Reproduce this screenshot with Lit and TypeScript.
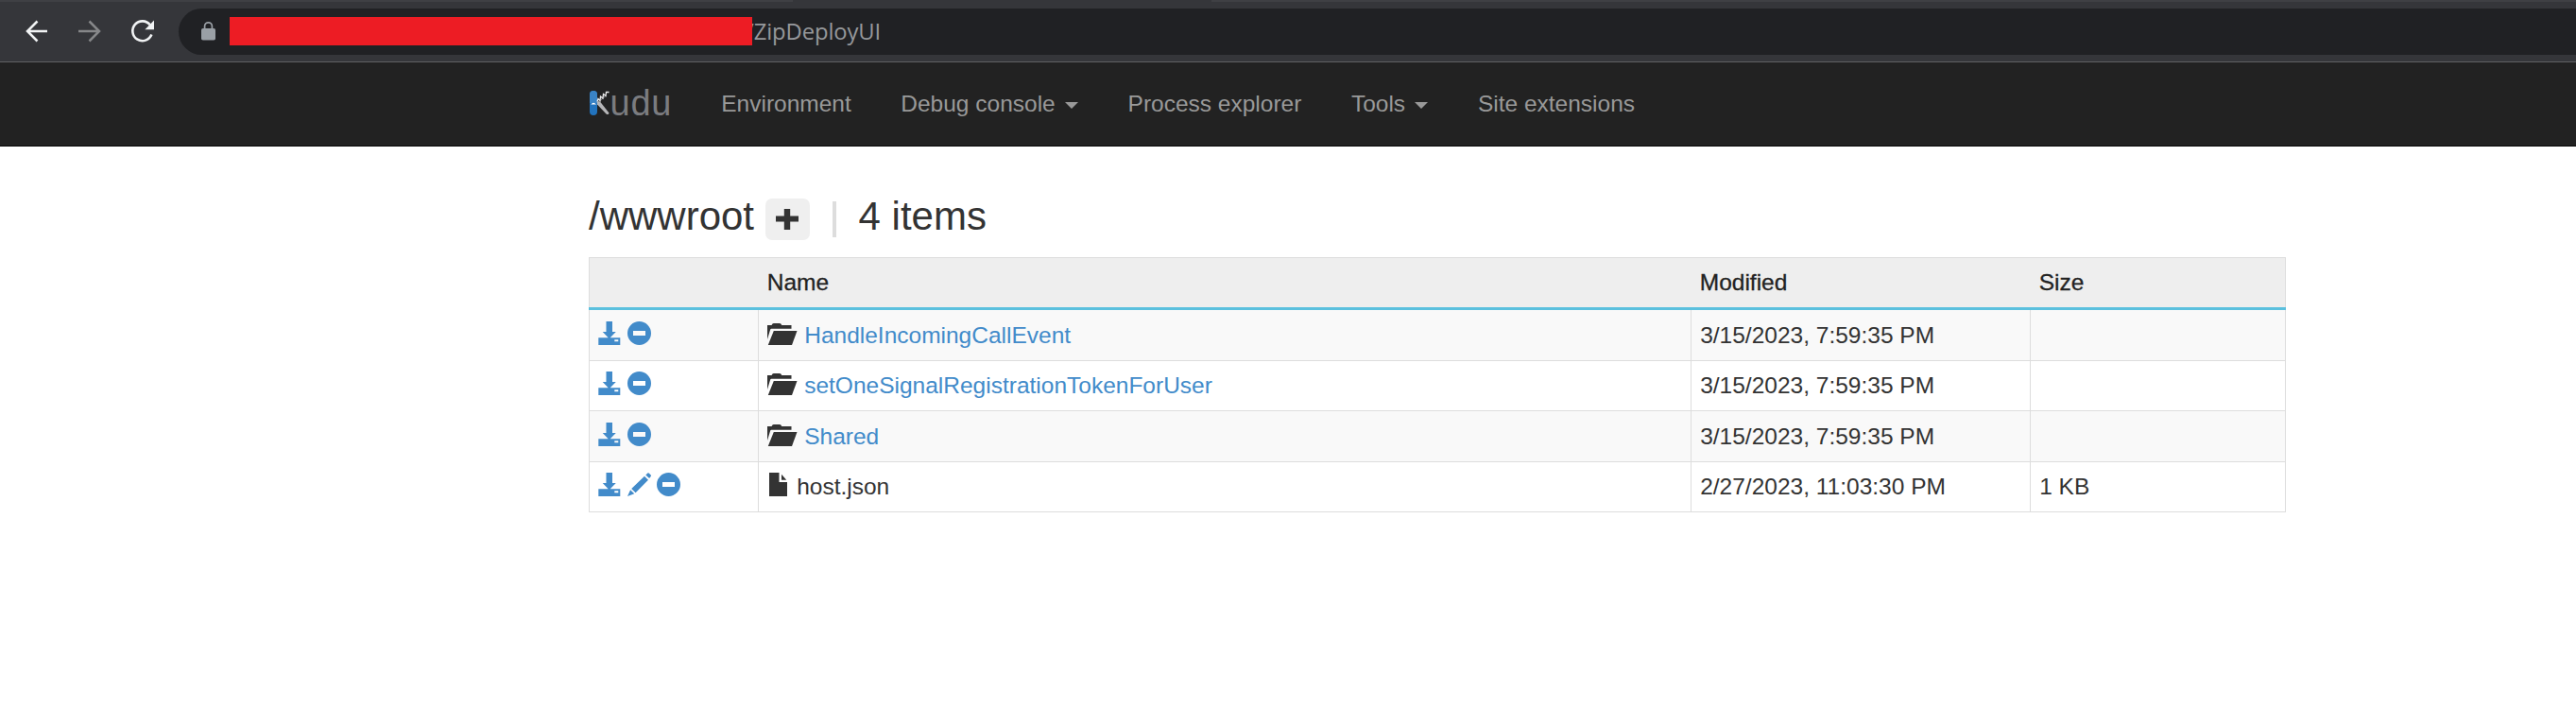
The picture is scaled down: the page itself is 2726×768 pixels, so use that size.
import { LitElement, html, css, svg } from "lit";
import { customElement, property } from "lit/decorators.js";

interface Entry {
  name: string;
  modified: string;
  size: string;
  folder: boolean;
}

const ENTRIES: Entry[] = [
  { name: "HandleIncomingCallEvent", modified: "3/15/2023, 7:59:35 PM", size: "", folder: true },
  { name: "setOneSignalRegistrationTokenForUser", modified: "3/15/2023, 7:59:35 PM", size: "", folder: true },
  { name: "Shared", modified: "3/15/2023, 7:59:35 PM", size: "", folder: true },
  { name: "host.json", modified: "2/27/2023, 11:03:30 PM", size: "1 KB", folder: false },
];

const GLYPHS: Record<string, { w: number; h: number; body: unknown }> = {
  back: { w: 24, h: 24, body: svg`<path d="M12.500 1.500 2 12 12.500 22.500M2 12H23" fill="none" stroke="currentColor" stroke-width="2.5"/>` },
  forward: { w: 24, h: 24, body: svg`<path d="M11.500 1.500 22 12 11.500 22.500M22 12H0" fill="none" stroke="currentColor" stroke-width="2.5"/>` },
  reload: { w: 24, h: 24, body: svg`<path d="M19.800 5.200A10.400 10.400 0 1 0 21.400 15.600" fill="none" stroke="currentColor" stroke-width="2.600"/><path d="M24 .6V10.200H14.400Z" fill="currentColor"/>` },
  lock: { w: 15, h: 20, body: svg`<rect y="7" width="15" height="12.500" rx="1.800" fill="currentColor"/><path d="M3.600 8V4.700a3.900 3.900 0 0 1 7.800 0V8" fill="none" stroke="currentColor" stroke-width="1.700"/>` },
  plus: { w: 24, h: 22, body: svg`<path d="M8.800 0h6.400v7.600H24v6H15.200V22H8.800V13.600H0v-6h8.800z" fill="currentColor"/>` },
  download: { w: 24, h: 25, body: svg`<path d="M8.500 0h6.500v11h3.800L12.700 17.200H23.300V25H.3V17.200H10.700L4.700 11h3.800zM17.300 19.200v2h4v-2z" fill="currentColor" fill-rule="evenodd"/>` },
  remove: { w: 25, h: 25, body: svg`<path d="M12.500 0a12.500 12.500 0 1 1 0 25 12.500 12.500 0 1 1 0-25zM6 10v5h13v-5z" fill="currentColor" fill-rule="evenodd"/>` },
  edit: { w: 25, h: 25, body: svg`<path d="M18 3.700 22 7.700 8.600 21.300 4.200 17zM19.300 2.400 21.400.5Q22 0 22.700.6L24.700 2.600Q25.300 3.300 24.700 4L23.100 6.100zM3.100 18.200 7.300 22.300 0 25z" fill="currentColor"/>` },
  folder: { w: 32, h: 23, body: svg`<path d="M0 17V2h4.500L5.500.6Q6 0 6.800 0H13Q13.800 0 14.300.6L15.300 2H25.500V5.800H4.300Q3.500 5.800 3.200 6.600z" fill="currentColor"/><path d="M6.800 8H31.500L26 23H.8z" fill="currentColor"/>` },
  file: { w: 19, h: 25, body: svg`<path d="M0 0H10.500V10H19V25H0z" fill="currentColor"/><path d="M13 1.800V7.800H18.200z" fill="currentColor"/>` },
  kudu: {
    w: 23, h: 28,
    body: svg`<rect x="0" y="1" width="8" height="26" rx="4" fill="#2273bd"/>
      <path d="M0 14V5a4 4 0 0 1 8 0v9z" fill="#3a84c6"/>
      <path d="M1.300 15.500Q4 12 7 15.500z" fill="#fff"/>
      <path d="M7.800 12.500 11 12.500 20.500 24.500Q20 27 17.500 25.500L8 15.500z" fill="#b5b5b7"/>
      <path d="M8 12.500 9 9.500 11 11.500 11.500 7 14 9 14.500 4.500 17 6.500 17.500 2.500 20.500 2.500" fill="none" stroke="#ececec" stroke-width="1.300"/>
      <path d="M8.500 13.500 18 5.500" fill="none" stroke="#b5b5b7" stroke-width=".8"/>`,
  },
};

@customElement("kudu-icon")
export class KuduIcon extends LitElement {
  @property() name = "plus";
  static styles = css`
    :host { display: inline-flex; flex: none; }
    .glyph { display: block; overflow: visible; }
  `;
  render() {
    const g = GLYPHS[this.name];
    return html`<svg class="glyph" width=${g.w} height=${g.h} viewBox="0 0 ${g.w} ${g.h}">${g.body}</svg>`;
  }
}

@customElement("browser-bar")
export class BrowserBar extends LitElement {
  static styles = css`
    :host { display: block; }
    .tabs { display: flex; height: 2px; background: #3f4044; }
    .active { margin-left: 839px; width: 443px; background: #35363a; }
    .bar {
      display: flex; align-items: center; box-sizing: border-box; height: 64px;
      padding: 0 0 1px 27px; background: #35363a; border-bottom: 1px solid #606164; color: #f1f3f4;
    }
    .nav { display: flex; gap: 32px; width: 162px; }
    .dim { color: #868789; }
    .address {
      display: flex; align-items: center; flex: 1; height: 49px; padding-left: 24px;
      background: #202124; border-radius: 24.5px 0 0 24.5px; color: #9aa0a6;
    }
    .redacted { width: 553px; height: 30px; margin-left: 15px; background: #ed1c24; z-index: 1; }
    .path {
      margin-left: -7px; font: 23.8px/46px "Open Sans", sans-serif; color: #96989b;
      letter-spacing: -0.1px; white-space: nowrap;
    }
  `;
  render() {
    return html`
      <div class="tabs"><div class="active"></div></div>
      <div class="bar">
        <div class="nav">
          <kudu-icon name="back"></kudu-icon>
          <kudu-icon class="dim" name="forward"></kudu-icon>
          <kudu-icon name="reload"></kudu-icon>
        </div>
        <div class="address">
          <kudu-icon name="lock"></kudu-icon>
          <div class="redacted"></div>
          <div class="path">/ZipDeployUI</div>
        </div>
      </div>`;
  }
}

@customElement("kudu-navbar")
export class KuduNavbar extends LitElement {
  static styles = css`
    :host {
      display: flex; align-items: center; box-sizing: border-box; height: 89px;
      padding: 0 0 1px 623.5px; background: #222; border-bottom: 1px solid #080808;
      font: 24.5px/35px "Liberation Sans", Arial, sans-serif; color: #999;
    }
    .brand { display: flex; align-items: center; width: 113.5px; font-size: 38px; color: #7b7c80; }
    .word { margin-left: -1px; padding-bottom: 2px; line-height: 44px; letter-spacing: 0.8px; }
    .mark { padding-bottom: 2px; }
    .item { display: flex; align-items: center; padding: 0 26.25px; white-space: nowrap; }
    .caret {
      margin: 4px 0 0 10.300px; border: 7px solid transparent;
      border-top-color: currentColor; border-bottom: 0;
    }
  `;
  render() {
    const items: [string, boolean][] = [
      ["Environment", false], ["Debug console", true], ["Process explorer", false],
      ["Tools", true], ["Site extensions", false],
    ];
    return html`
      <div class="brand"><kudu-icon class="mark" name="kudu"></kudu-icon><span class="word">udu</span></div>
      ${items.map(([label, menu]) => html`
        <div class="item">${label}${menu ? html`<span class="caret"></span>` : ""}</div>`)}`;
  }
}

@customElement("file-table")
export class FileTable extends LitElement {
  static styles = css`
    :host { display: block; border-top: 1px solid #ddd; }
    .row {
      display: grid; grid-template-columns: 179px 987px 359px 1fr; box-sizing: border-box;
      height: 53.5px; border-bottom: 1px solid #ddd; border-right: 1px solid #ddd; background: #fff;
    }
    .odd { background: #f9f9f9; }
    .head {
      height: 55px; background: #eee; border-bottom: 3px solid #5bc0de; color: #222;
      border-right: 0; box-shadow: inset 1px 0 #ddd, inset -1px 0 #ddd;
    }
    .cell {
      display: flex; align-items: center; padding-left: 9.2px;
      border-left: 1px solid #ddd; white-space: nowrap;
    }
    .head .cell { padding: 0 0 2px 8.75px; border-left-color: transparent; -webkit-text-stroke: 0.3px #222; }
    .actions { gap: 6.5px; padding: 0 0 4px 9px; color: #428bca; }
    .link { margin-left: 7px; color: #428bca; }
    .plain { margin-left: 10px; }
    .folder { padding-bottom: 2px; }
    .file { padding: 0 0 5px 2px; }
  `;
  render() {
    return html`
      <div class="row head">
        <div class="cell"></div><div class="cell">Name</div>
        <div class="cell">Modified</div><div class="cell">Size</div>
      </div>
      ${ENTRIES.map((e, i) => html`
        <div class="row ${i % 2 ? "" : "odd"}">
          <div class="cell actions">
            <kudu-icon name="download"></kudu-icon>
            ${e.folder ? "" : html`<kudu-icon name="edit"></kudu-icon>`}
            <kudu-icon name="remove"></kudu-icon>
          </div>
          <div class="cell">
            <kudu-icon class=${e.folder ? "folder" : "file"} name=${e.folder ? "folder" : "file"}></kudu-icon>
            <span class=${e.folder ? "link" : "plain"}>${e.name}</span>
          </div>
          <div class="cell">${e.modified}</div>
          <div class="cell">${e.size}</div>
        </div>`)}`;
  }
}

@customElement("app-root")
export class AppRoot extends LitElement {
  static styles = css`
    :host {
      display: block; height: 768px; overflow: hidden; background: #fff; color: #333;
      font: 24.5px/35px "Liberation Sans", Arial, sans-serif;
    }
    .content { width: 1796px; padding: 55px 0 0 623px; }
    .heading { display: flex; align-items: center; height: 44px; margin-bottom: 18px; font-size: 42px; }
    .title { line-height: 44px; padding-bottom: 6px; white-space: nowrap; }
    .add {
      display: flex; align-items: center; justify-content: center; width: 47px; height: 44px;
      margin-left: 11.500px; background: #efefef; border-radius: 7px;
    }
    .rule { width: 4px; height: 38px; margin: 0 24px 0 24px; background: #ddd; }
  `;
  render() {
    return html`
      <browser-bar></browser-bar>
      <kudu-navbar></kudu-navbar>
      <div class="content">
        <div class="heading">
          <span class="title">/wwwroot</span>
          <div class="add"><kudu-icon name="plus"></kudu-icon></div>
          <div class="rule"></div>
          <span class="title">4 items</span>
        </div>
        <file-table></file-table>
      </div>`;
  }
}
